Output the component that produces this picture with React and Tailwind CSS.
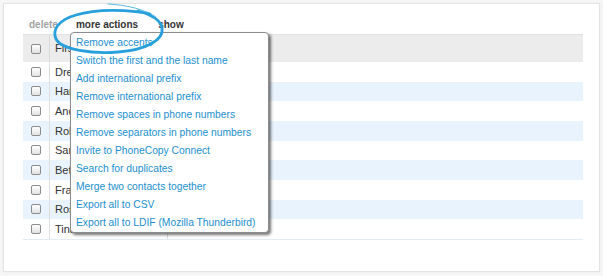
import React from "react";

const menu = [
  "Remove accents",
  "Switch the first and the last name",
  "Add international prefix",
  "Remove international prefix",
  "Remove spaces in phone numbers",
  "Remove separators in phone numbers",
  "Invite to PhoneCopy Connect",
  "Search for duplicates",
  "Merge two contacts together",
  "Export all to CSV",
  "Export all to LDIF (Mozilla Thunderbird)",
];

const rows = ["Drew", "Hana", "Andrew", "Robert", "Sarah", "Betty", "Frank", "Rosie", "Tina"];

function Box() {
  return (
    <span className="block w-[10px] h-[10px] rounded-[2px] border border-[#8c8c8c] bg-gradient-to-b from-white to-[#e2e2e2]" />
  );
}

export default function App() {
  return (
    <div
      className="relative w-[603px] h-[276px] bg-[#f6f6f6] p-[3px] overflow-hidden"
      style={{ fontFamily: '"Liberation Sans", Arial, sans-serif' }}
    >
      <div className="w-[597px] h-[269px] bg-white border border-[#e4e4e4] shadow-[0_0_2px_rgba(0,0,0,0.06)]">
        <div className="h-[30px] pl-[25px] flex items-end pb-[3px] gap-[18px] text-[10px] font-bold leading-[12px]">
          <span className="text-[#a3a3a3]">delete</span>
          <span className="text-[#333]">more actions</span>
          <span className="text-[#333] ml-[2px]">show</span>
        </div>
        <div className="ml-[19px] w-[560px] text-[11px] text-[#333]">
          <div className="flex h-[28px] bg-[#ececec] border-t border-[#e2e2e2]">
            <div className="w-[27px] border-r border-[#d8d8d8] flex items-center justify-center">
              <Box />
            </div>
            <div className="w-[118px] border-r border-[#d8d8d8] flex items-center pl-[5px]">First name</div>
            <div className="flex-1" />
          </div>
          {rows.map((r, i) => (
            <div
              key={i}
              className={`flex h-[19.67px] ${i % 2 === 1 ? "bg-[#e9f3fd]" : "bg-white"}`}
            >
              <div className="w-[27px] border-r border-[#dedede] flex items-center justify-center">
                <Box />
              </div>
              <div className="w-[118px] border-r border-[#dedede] flex items-center pl-[5px]">{r}</div>
              <div className="flex-1" />
            </div>
          ))}
          <div className="h-px bg-[#e3ecf5]" />
        </div>
      </div>

      <div className="absolute left-[70px] top-[32px] w-[199px] bg-white border border-[#8d8d8d] rounded-[4px] shadow-[2px_2px_3px_rgba(0,0,0,0.55)] pl-[5px] pt-[1px] text-[10.3px] leading-[18px] text-[#1c8fd0]">
        {menu.map((m) => (
          <div key={m} className="whitespace-nowrap">{m}</div>
        ))}
      </div>

      <svg className="absolute left-0 top-0 pointer-events-none" width="603" height="276">
        <path
          d="M150,14 C128,9 96,9 76,15 C58,20 52,30 56,39 C62,50 92,54 118,52 C146,50 164,40 162,28 C161,20 152,15 138,11"
          fill="none"
          stroke="#27a0db"
          strokeWidth="2.8"
          strokeLinecap="round"
        />
        <path
          d="M108,4 C128,5 146,10 156,17"
          fill="none"
          stroke="#27a0db"
          strokeWidth="1"
          strokeLinecap="round"
          opacity="0.75"
        />
      </svg>
    </div>
  );
}
